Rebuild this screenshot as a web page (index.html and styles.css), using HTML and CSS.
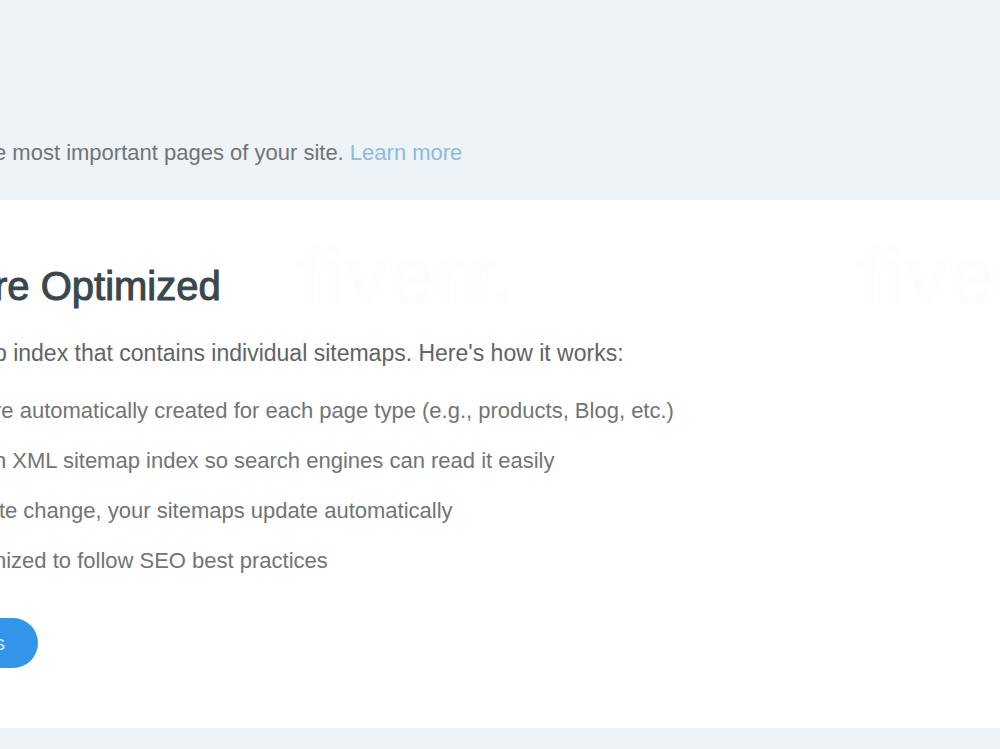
FILE: index.html
```
<!DOCTYPE html>
<html lang="en">
<head>
  <meta charset="UTF-8">
  <meta name="viewport" content="width=device-width, initial-scale=1.0">
  <title>Sitemaps</title>
  <link rel="stylesheet" href="styles.css">
</head>
<body>
  <header class="page-header">
    <p>e most important pages of your site. <a href="#">Learn more</a></p>
  </header>

  <main class="card">
    <span class="watermark watermark-left" aria-hidden="true">fiverr.</span>
    <span class="watermark watermark-right" aria-hidden="true">fiverr.</span>

    <h1>re Optimized</h1>
    <p class="intro">p index that contains individual sitemaps. Here's how it works:</p>
    <ul class="features">
      <li>re automatically created for each page type (e.g., products, Blog, etc.)</li>
      <li>h XML sitemap index so search engines can read it easily</li>
      <li>ite change, your sitemaps update automatically</li>
      <li>nized to follow SEO best practices</li>
    </ul>
    <button type="button" class="btn">s</button>
  </main>
</body>
</html>
```
FILE: styles.css
```
* {
  box-sizing: border-box;
}

body {
  margin: 0;
  overflow: hidden;
  background-color: #eef3f7;
  color: #707577;
  font-family: "Liberation Sans", Arial, sans-serif;
  font-size: 22px;
  line-height: 30px;
  white-space: nowrap;
}

h1, p, ul {
  margin: 0 0 0 -6px;
  padding: 0;
}

.page-header {
  padding: 138px 0 32px;
}

.page-header a {
  color: #8dbbdb;
  text-decoration: none;
}

/* main card */
.card {
  position: relative;
  overflow: hidden;
  padding: 62px 0 60px;
  background-color: #fff;
}

h1 {
  color: #3a474c;
  font-size: 40px;
  font-weight: normal;
  line-height: 48px;
  -webkit-text-stroke: 1px #3a474c;
}

.intro {
  margin-top: 28px;
  color: #606567;
  font-size: 23px;
}

.features {
  display: flex;
  flex-direction: column;
  gap: 20px;
  margin-top: 28px;
  list-style: none;
}

.btn {
  display: block;
  height: 50px;
  margin: 42px 0 0 -80px;
  padding: 0 33px 0 75px;
  border: 0;
  border-radius: 0 25px 25px 0;
  background-color: #3295e9;
  color: #d6eafb;
  font-family: inherit;
  font-size: 20px;
  cursor: pointer;
}

/* faint marks behind the text */
.watermark {
  position: absolute;
  top: 36px;
  color: #fdfdfd;
  font-size: 80px;
  font-weight: bold;
  line-height: 80px;
}

.watermark-left {
  left: 296px;
}

.watermark-right {
  left: 856px;
}
```
